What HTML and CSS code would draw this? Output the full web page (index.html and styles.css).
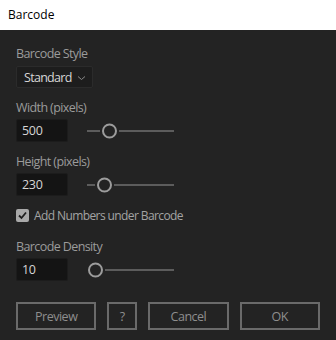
FILE: index.html
```html
<!doctype html>
<html>
<head>
<meta charset="utf-8">
<title>Barcode</title>
<link rel="stylesheet" href="styles.css">
</head>
<body>
<div class="dialog">
	<div class="title-bar">Barcode</div>
	<div class="dialog-body">
		<div class="field">
			<label class="field-label">Barcode Style</label>
			<div class="select">
				<span>Standard</span>
				<svg class="chevron" width="9" height="6" viewBox="0 0 9 6"><path d="M1 1.5 L4.5 4.5 L8 1.5" fill="none" stroke="#8a8a8a" stroke-width="1"/></svg>
			</div>
		</div>

		<div class="field">
			<label class="field-label">Width (pixels)</label>
			<div class="input-row">
				<div class="num-input">500</div>
				<svg class="slider" width="88" height="16" viewBox="0 0 88 16">
					<line x1="0" y1="8" x2="13" y2="8" class="track"/>
					<circle cx="22.5" cy="8" r="6.5" class="knob"/>
					<line x1="32" y1="8" x2="87" y2="8" class="track"/>
				</svg>
			</div>
		</div>

		<div class="field">
			<label class="field-label">Height (pixels)</label>
			<div class="input-row">
				<div class="num-input">230</div>
				<svg class="slider" width="88" height="16" viewBox="0 0 88 16">
					<line x1="0" y1="8" x2="8" y2="8" class="track"/>
					<circle cx="17.5" cy="8" r="6.5" class="knob"/>
					<line x1="27" y1="8" x2="87" y2="8" class="track"/>
				</svg>
			</div>
		</div>

		<div class="check-row">
			<span class="checkbox">
				<svg width="13" height="13" viewBox="0 0 13 13"><path d="M3 6.5 L5.5 9 L10 3.5" fill="none" stroke="#1e1e1e" stroke-width="1.8"/></svg>
			</span>
			<span class="check-label">Add Numbers under Barcode</span>
		</div>

		<div class="field">
			<label class="field-label">Barcode Density</label>
			<div class="input-row">
				<div class="num-input">10</div>
				<svg class="slider" width="88" height="16" viewBox="0 0 88 16">
					<circle cx="8.5" cy="8" r="6.5" class="knob"/>
					<line x1="18" y1="8" x2="87" y2="8" class="track"/>
				</svg>
			</div>
		</div>

		<div class="buttons">
			<button class="btn btn-wide">Preview</button>
			<button class="btn btn-help">?</button>
			<button class="btn btn-wide">Cancel</button>
			<button class="btn btn-wide">OK</button>
		</div>
	</div>
</div>
</body>
</html>
```

FILE: styles.css
```css
*{box-sizing: border-box;}
body{
	margin: 0;
	background-color: #232323;
	font-family: "Open Sans", "Noto Sans", sans-serif;
	width: 336px;
	height: 340px;
	overflow: hidden;
}
.title-bar{
	background-color: #fff;
	color: #000;
	height: 30px;
	padding: 7px 0 0 8px;
	font-size: 12px;
	line-height: 15px;
}
.dialog-body{
	padding: 16px 16px 0 16px;
	display: flex;
	flex-direction: column;
}
.field{
	display: flex;
	flex-direction: column;
	margin-bottom: 12px;
}
.field-label{
	color: #9b9b9b;
	font-size: 12.5px;
	line-height: 15px;
	height: 15px;
	margin-bottom: 4px;
	letter-spacing: -0.6px;
}
.field:first-child .field-label{
	margin-bottom: 5px;
}
.select{
	width: 77px;
	height: 22px;
	background-color: #1d1d1d;
	border: 1px solid #2b2b2b;
	border-radius: 2px;
	display: flex;
	align-items: center;
	justify-content: space-between;
	padding: 0 6px 0 7px;
	color: #d6d6d6;
	font-size: 12.5px;
	letter-spacing: -0.7px;
}
.chevron{
	margin-top: 1px;
}
.input-row{
	display: flex;
	align-items: center;
}
.num-input{
	width: 52px;
	height: 23px;
	background-color: #141414;
	border: 1px solid #1c1c1c;
	border-radius: 2px;
	color: #d6d6d6;
	font-size: 12.5px;
	line-height: 21px;
	padding-left: 5px;
	letter-spacing: -0.3px;
}
.slider{
	margin-left: 19px;
}
.track{
	stroke: #5c5c5c;
	stroke-width: 2;
}
.knob{
	fill: #232323;
	stroke: #9c9c9c;
	stroke-width: 2;
}
.check-row{
	display: flex;
	align-items: center;
	height: 14px;
	margin-bottom: 17px;
}
.checkbox{
	width: 13px;
	height: 13px;
	background-color: #a9a9a9;
	border-radius: 2px;
	display: flex;
}
.check-label{
	color: #a3a3a3;
	font-size: 12px;
	margin-left: 5px;
	letter-spacing: -0.6px;
}
.buttons{
	display: flex;
	margin-top: 9px;
}
.btn{
	height: 28px;
	background-color: transparent;
	border: 2px solid #6a6a6a;
	color: #8e8e8e;
	font-family: inherit;
	font-size: 12.5px;
	letter-spacing: -0.5px;
	padding: 0;
	margin-right: 11px;
}
.btn-wide{
	width: 81px;
}
.btn-help{
	width: 30px;
}
.btn:last-child{
	margin-right: 0;
}
```
